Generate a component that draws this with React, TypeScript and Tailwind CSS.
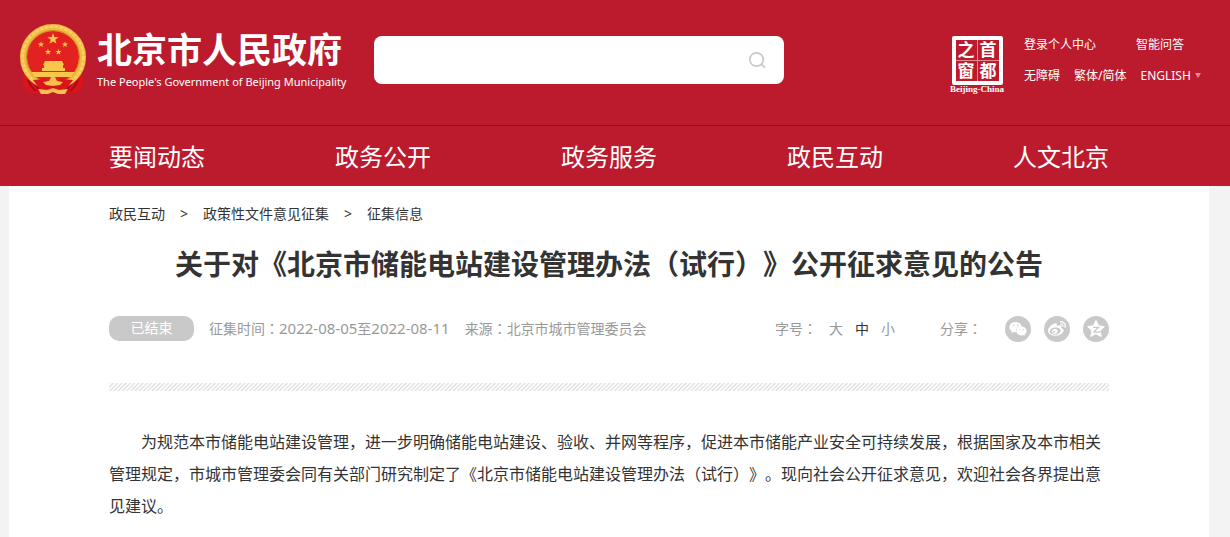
import { useState } from "react";
import { FaWeibo, FaWeixin } from "react-icons/fa";

const NAV = ["要闻动态", "政务公开", "政务服务", "政民互动", "人文北京"];
const CRUMBS = ["政民互动", "政策性文件意见征集", "征集信息"];
const SIZES = [
  { label: "大", body: "text-lg" },
  { label: "中", body: "text-base" },
  { label: "小", body: "text-sm" },
];

const STAR = "M0-10 2.4-3.2 9.5-3.1 3.8 1.2 5.9 8.1 0 4-5.9 8.1-3.8 1.2-9.5-3.1-2.4-3.2Z";

// Full-width colon, centred in its cell
function Colon() {
  return <span lang="zh-TW" className="font-['Noto_Sans_CJK_TC',sans-serif] leading-none">：</span>;
}

function Emblem() {
  return (
    <svg viewBox="0 0 66 70" className="h-[70px] w-[66px] shrink-0" aria-hidden="true">
      <path d="M5 46 2 58l4 9 10 3 17-4 17 4 10-3 4-9-3-12Z" fill="#d9141c" />
      <path d="M8 56q3 7 8 11M58 56q-3 7-8 11M14 60q4 2 5 7M52 60q-4 2-5 7" stroke="#a60d17" strokeWidth="2" fill="none" />
      <circle cx="33" cy="33" r="29.5" fill="#e3221f" stroke="#f0b840" strokeWidth="7" />
      <circle cx="33" cy="33" r="30.5" fill="none" stroke="#f9cf62" strokeWidth="3" strokeDasharray="4 1" />
      <circle cx="33" cy="33" r="26.5" fill="none" stroke="#c98a22" strokeWidth="1" />
      <g fill="#f8c64b">
        <path d={STAR} transform="translate(33 15) scale(.6)" />
        <path d={STAR} transform="translate(21 20.500) scale(.33)" />
        <path d={STAR} transform="translate(45 20.500) scale(.33)" />
        <path d={STAR} transform="translate(28 28) scale(.33)" />
        <path d={STAR} transform="translate(38.500 28) scale(.33)" />
        <path d="M25 37h17l2 4H23ZM24 41h19v3h2v3H22v-3h2ZM11 48h44l-4 5H15Z" />
      </g>
      <path d="m13 56 12-1 4 4h8l4-4 12 1-6 8-14 3-14-3Z" fill="#d9141c" />
      <path d="m23 58 6-1 2-4h4l2 4 6 1-3 3-7 1-7-1ZM18 65l9 1 6-2 6 2 9-1-3 5-7 0-5-2-5 2-7 0Z" fill="#f6c04a" />
    </svg>
  );
}

function QzoneStar() {
  return (
    <svg viewBox="0 0 20 20" className="h-5 w-5" aria-hidden="true">
      <path
        d="m10 1.500 2.500 5.300 5.900.8-4.300 4 1.100 5.900L10 14.700l-5.200 2.800 1.100-5.900-4.300-4 5.900-.8Z"
        fill="#fff"
        stroke="#fff"
        strokeLinejoin="round"
      />
      <path d="M7 8.300h5.500L8 12.800q3 .6 6.500 0" fill="none" stroke="#c9c9c9" strokeWidth="1.300" />
    </svg>
  );
}

function SealLogo() {
  return (
    <a href="#" className="flex w-[54px] shrink-0 flex-col items-center text-white">
      <span className="grid grid-cols-2 gap-px rounded-xs border-4 border-white bg-[#e58a92] text-[17px] leading-5 font-bold">
        {["之", "首", "窗", "都"].map((c) => (
          <span key={c} className="h-5 w-[21px] bg-[#bc1b2d] text-center">{c}</span>
        ))}
      </span>
      <span className="font-['Liberation_Serif',serif] text-[9px] leading-[8px] font-bold whitespace-nowrap">Beijing-China</span>
    </a>
  );
}

function Header() {
  return (
    <header className="bg-[#bc1b2d] text-white">
      <div className="border-b border-[#960f1f] pr-3">
        <div className="mx-auto flex h-[125px] max-w-[1200px] items-start pt-6 pl-[11px]">
          <a href="#" className="flex shrink-0 gap-[11px]">
            <Emblem />
            <span className="flex w-[245px] flex-col pt-1">
              <span className="text-[35px] leading-[44px] font-bold">北京市人民政府</span>
              <span className="text-[11px] leading-5 whitespace-nowrap">The People's Government of Beijing Municipality</span>
            </span>
          </a>
          <form
            className="mt-3 ml-8 flex h-12 w-[410px] items-center rounded-lg bg-white pr-[18px]"
            onSubmit={(e) => e.preventDefault()}
          >
            <input type="text" aria-label="搜索" className="h-full min-w-0 flex-1 px-4 text-base text-[#333] outline-none" />
            <button type="submit" aria-label="搜索">
              <svg viewBox="0 0 18 18" className="h-[18px] w-[18px]" fill="none" stroke="#c8c8c8" strokeWidth="1.700">
                <circle cx="8.500" cy="8.500" r="6.700" />
                <path d="m13 13 4 3.500" />
              </svg>
            </button>
          </form>
          <div className="mt-3 ml-auto flex gap-5">
            <SealLogo />
            <div className="w-[185px] text-xs leading-[17px]">
              <div className="flex gap-10">
                <a href="#">登录个人中心</a>
                <a href="#">智能问答</a>
              </div>
              <div className="mt-[14px] flex gap-[14px]">
                <a href="#">无障碍</a>
                <a href="#">繁体/简体</a>
                <button type="button" className="flex items-center gap-1">
                  ENGLISH <span className="border-x-3 border-t-5 border-x-transparent border-t-[#e58a92]" />
                </button>
              </div>
            </div>
          </div>
        </div>
      </div>
      <nav className="pr-3">
        <div className="mx-auto flex h-[60px] max-w-[1000px] items-center justify-between pt-0.5 text-2xl">
          {NAV.map((n) => (
            <a key={n} href="#">{n}</a>
          ))}
        </div>
      </nav>
    </header>
  );
}

export default function App() {
  const [size, setSize] = useState("中");
  const body = SIZES.find((s) => s.label === size)?.body;

  return (
    <div lang="zh-CN" className="flex min-h-screen flex-col bg-[#f3f3f3] font-['Noto_Sans','Noto_Sans_CJK_SC',sans-serif] text-[#333] [text-spacing-trim:space-all]">
      <Header />
      <div className="flex flex-1 flex-col pr-3">
        <main className="mx-auto w-full max-w-[1200px] flex-1 bg-white px-[100px] pt-[18px]">
          {/* Breadcrumb */}
          <nav className="flex gap-[15px] text-sm leading-5">
            {CRUMBS.map((c, i) => (
              <span key={c} className="flex gap-[15px]">
                {i > 0 && <span>&gt;</span>}
                <a href="#">{c}</a>
              </span>
            ))}
          </nav>

          <h1 className="mt-5 text-center text-[28px] leading-10 font-bold">
            关于对《北京市储能电站建设管理办法（试行）》公开征求意见的公告
          </h1>

          {/* Status, dates, text size and share */}
          <div className="mt-8 flex h-[26px] items-center text-sm text-[#999]">
            <span className="h-[25px] w-[85px] self-start rounded-[10px] bg-[#c9c9c9] text-center leading-6 text-white">已结束</span>
            <span className="ml-[15px]">
              征集时间<Colon />
              <span className="text-[15px]">2022-08-05</span>至<span className="text-[15px]">2022-08-11</span>
            </span>
            <span className="ml-[15px]">来源<Colon />北京市城市管理委员会</span>
            <div className="ml-auto flex items-center">
              <span>字号<Colon /></span>
              {SIZES.map((s) => (
                <button
                  key={s.label}
                  type="button"
                  aria-pressed={size === s.label}
                  onClick={() => setSize(s.label)}
                  className={`ml-3 ${size === s.label ? "text-[#333]" : ""}`}
                >
                  {s.label}
                </button>
              ))}
            </div>
            <div className="ml-[45px] flex items-center gap-[13px]">
              <span className="mr-[10px]">分享<Colon /></span>
              <button type="button" aria-label="微信" className="flex h-[26px] w-[26px] items-center justify-center rounded-full bg-[#c9c9c9] text-white">
                <FaWeixin className="h-[18px] w-[18px]" />
              </button>
              <button type="button" aria-label="微博" className="flex h-[26px] w-[26px] items-center justify-center rounded-full bg-[#c9c9c9] text-white">
                <FaWeibo className="h-[18px] w-[18px]" />
              </button>
              <button type="button" aria-label="QQ空间" className="flex h-[26px] w-[26px] items-center justify-center rounded-full bg-[#c9c9c9]">
                <QzoneStar />
              </button>
            </div>
          </div>

          <div className="mt-[41px] h-2 bg-[repeating-linear-gradient(135deg,#ddd_0px,#fff_1.5px,#fff_2px,#ddd_3px)]" />

          <p className={`mt-[35px] indent-[2em] leading-8 ${body}`}>
            为规范本市储能电站建设管理，进一步明确储能电站建设、验收、并网等程序，促进本市储能产业安全可持续发展，根据国家及本市相关管理规定，市城市管理委会同有关部门研究制定了《北京市储能电站建设管理办法（试行）》。现向社会公开征求意见，欢迎社会各界提出意见建议。
          </p>
        </main>
      </div>
    </div>
  );
}
